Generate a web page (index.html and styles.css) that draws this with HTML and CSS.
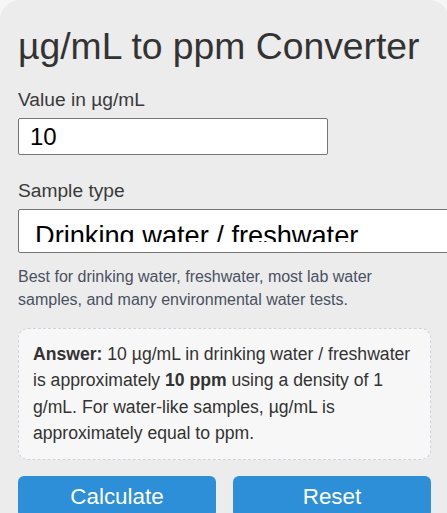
FILE: index.html
```html
<!DOCTYPE html>
<html lang="en">
<head>
    <meta charset="UTF-8">
    <meta name="viewport" content="width=device-width, initial-scale=1.0">
    <title>µg/mL to ppm Converter</title>
    <link rel="stylesheet" href="styles.css">
</head>
<body>

    <div class="calc-card">
        <h1>µg/mL to ppm Converter</h1>

        <label class="field-label" for="value-input">Value in µg/mL</label>
        <input id="value-input" class="value-input" type="text" value="10">

        <label class="field-label sample-label" for="sample-type">Sample type</label>
        <select id="sample-type" class="sample-select">
            <option value="1" selected>Drinking water / freshwater</option>
            <option value="1.025">Seawater</option>
            <option value="0.79">Ethanol</option>
        </select>
        <p id="sample-note" class="sample-note">Best for drinking water, freshwater, most lab water samples, and many environmental water tests.</p>

        <div id="answer" class="answer-box">
            <strong>Answer:</strong> 10 µg/mL in drinking water / freshwater is approximately <strong>10 ppm</strong> using a density of 1 g/mL. For water-like samples, µg/mL is approximately equal to ppm.
        </div>

        <div class="btn-row">
            <button id="calc-btn" class="btn">Calculate</button>
            <button id="reset-btn" class="btn">Reset</button>
        </div>
    </div>

    <script>
        const valueInput = document.getElementById('value-input');
        const sampleSelect = document.getElementById('sample-type');
        const answerEl = document.getElementById('answer');

        document.getElementById('calc-btn').addEventListener('click', function () {
            const value = parseFloat(valueInput.value);
            if (isNaN(value)) {
                answerEl.textContent = 'Please enter a valid number.';
                return;
            }
            const density = parseFloat(sampleSelect.value);
            const ppm = +(value / density).toFixed(4);
            const name = sampleSelect.options[sampleSelect.selectedIndex].text.toLowerCase();
            answerEl.innerHTML = '<strong>Answer:</strong> ' + value + ' µg/mL in ' + name +
                ' is approximately <strong>' + ppm + ' ppm</strong> using a density of ' + density + ' g/mL.';
        });

        document.getElementById('reset-btn').addEventListener('click', function () {
            valueInput.value = '';
            sampleSelect.selectedIndex = 0;
            answerEl.textContent = '';
        });
    </script>

</body>
</html>
```

FILE: styles.css
```css
html, body {
    overflow: hidden;
}
body {
    margin: 0;
    background-color: #f6f6f6;
    font-family: "Liberation Sans", Arial, Helvetica, sans-serif;
    color: #333;
}
.calc-card {
    box-sizing: border-box;
    width: 449px;
    padding: 25px 18px 20px;
    background-color: #ebeceb;
    border-radius: 20px;
    overflow: hidden;
}
h1 {
    margin: 0 0 21px;
    font-size: 37.3px;
    font-weight: normal;
    color: #333;
}
.field-label {
    display: block;
    font-size: 19.2px;
    color: #3a3a3a;
    margin-bottom: 7px;
}
.sample-label {
    margin-top: 25px;
}
.value-input {
    box-sizing: border-box;
    display: block;
    width: 310px;
    height: 37px;
    padding: 0 11px;
    border: 1px solid #767676;
    border-radius: 2px;
    background: #fff;
    font-family: inherit;
    font-size: 24px;
    color: #000;
}
.sample-select {
    box-sizing: border-box;
    display: block;
    width: 470px;
    height: 44px;
    padding: 10px 16px;
    border: 1px solid #767676;
    border-radius: 2px;
    background: #fff;
    font-family: inherit;
    font-size: 27.2px;
    color: #000;
    appearance: none;
    -webkit-appearance: none;
}
.sample-note {
    margin: 12px 0 17px;
    font-size: 16px;
    line-height: 23px;
    color: #4a5162;
}
.answer-box {
    padding: 12px 14px;
    border: 1px dashed #cdd3de;
    border-radius: 10px;
    background-color: #f7f7f7;
    font-size: 17.6px;
    line-height: 1.5;
    color: #333;
}
.btn-row {
    display: flex;
    gap: 17px;
    margin-top: 16px;
}
.btn {
    flex: 1;
    padding: 8px 10px;
    border: none;
    border-radius: 6px;
    background-color: #2c8fd7;
    color: #fff;
    font-family: inherit;
    font-size: 22.4px;
    cursor: pointer;
}
.btn:hover {
    background-color: #257cbc;
}
```
